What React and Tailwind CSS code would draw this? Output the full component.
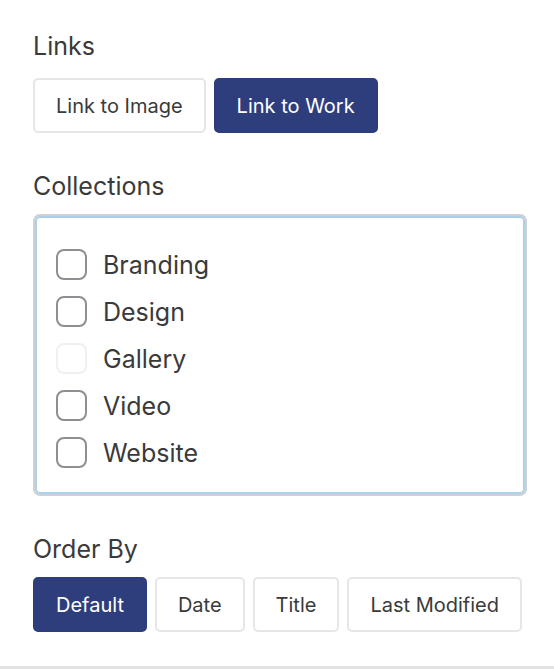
import React, { useState } from "react";

const COLLECTIONS = [
    { name: "Branding" },
    { name: "Design" },
    { name: "Gallery", muted: true },
    { name: "Video" },
    { name: "Website" },
];

const ORDERS = ["Default", "Date", "Title", "Last Modified"];

function Choice({ active, children, onClick }) {
    return (
        <button
            type="button"
            onClick={onClick}
            className={
                active
                    ? "h-[55px] whitespace-nowrap rounded-[5px] border-2 border-[#2e3e7c] bg-[#2e3e7c] px-[21px] text-[20px] text-white"
                    : "h-[55px] whitespace-nowrap rounded-[5px] border-2 border-[#e6e6e6] bg-white px-[21px] text-[20px] text-[#3a3a3a]"
            }
        >
            {children}
        </button>
    );
}

export default function App() {
    const [link, setLink]   = useState("work");
    const [order, setOrder] = useState("Default");
    const [checked, setChecked] = useState({});

    return (
        <div className="min-h-[670px] bg-white font-['Inter','Liberation_Sans',sans-serif] text-[#3a3a3a]">
            <div className="pl-[33px] pr-[27px] pt-[31px] pb-[34px]">
                {/* Links */}
                <div className="text-[25px] leading-[30px]">Links</div>
                <div className="mt-[17px] flex gap-2">
                    <Choice active={link === "image"} onClick={() => setLink("image")}>Link to Image</Choice>
                    <Choice active={link === "work"} onClick={() => setLink("work")}>Link to Work</Choice>
                </div>

                {/* Collections */}
                <div className="mt-[38px] text-[25px] leading-[30px]">Collections</div>
                <div className="mt-[13px] h-[282px] rounded-[7px] border-2 border-[#cdd0d4] shadow-[inset_0_0_0_2px_#acd0e8]">
                    <div className="flex flex-col gap-[16px] pl-[21px] pt-[33px]">
                        {COLLECTIONS.map((c) => (
                            <label key={c.name} className="flex items-center gap-[16px]">
                                <input
                                    type="checkbox"
                                    className="sr-only"
                                    checked={!!checked[c.name]}
                                    onChange={(e) => setChecked({ ...checked, [c.name]: e.target.checked })}
                                />
                                <span
                                    className={
                                        c.muted
                                            ? "h-[31px] w-[31px] rounded-[8px] border-2 border-[#f0f0f4] bg-white"
                                            : "h-[31px] w-[31px] rounded-[8px] border-2 border-[#8e8e93] bg-white"
                                    }
                                />
                                <span className="text-[25px] leading-[30px]">{c.name}</span>
                            </label>
                        ))}
                    </div>
                </div>

                {/* Order By */}
                <div className="mt-[38px] text-[25px] leading-[30px]">Order By</div>
                <div className="mt-[13px] flex gap-2">
                    {ORDERS.map((o) => (
                        <Choice key={o} active={order === o} onClick={() => setOrder(o)}>{o}</Choice>
                    ))}
                </div>
            </div>
            <div className="h-[3px] bg-[#e3e3e3]" />
        </div>
    );
}
